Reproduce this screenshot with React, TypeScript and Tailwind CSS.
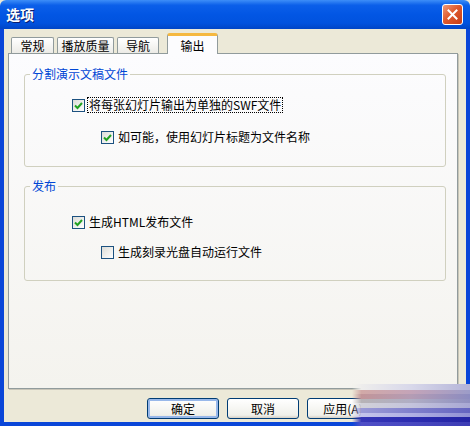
import React from "react";

const CheckBox = ({ checked }: { checked: boolean }) => (
  <span className="w-[13px] h-[13px] shrink-0 border border-[#1c5180] bg-[linear-gradient(135deg,#dcdcd7,#ffffff)] flex items-center justify-center">
    {checked && (
      <svg width="11" height="11" viewBox="0 0 11 11">
        <polyline points="2,5.5 4.5,8 9,3" fill="none" stroke="#21a121" strokeWidth="2" />
      </svg>
    )}
  </span>
);

const Option = ({
  checked,
  label,
  indent,
  focus,
}: {
  checked: boolean;
  label: string;
  indent: string;
  focus?: boolean;
}) => (
  <div className={`flex items-center h-[16px] gap-[3px] ${indent}`}>
    <CheckBox checked={checked} />
    <span className={`leading-[14px] px-[1px] ${focus ? "outline outline-1 outline-dotted outline-black" : ""}`}>
      {label}
    </span>
  </div>
);

const Tab = ({ label, w, active }: { label: string; w: string; active?: boolean }) =>
  active ? (
    <div
      className={`${w} h-[21px] -mb-[1px] relative z-10 bg-[#fcfcfe] border-x border-[#919b9c] border-t-[3px] border-t-[#f5b840] rounded-t-[3px] flex justify-center pt-[1px]`}
    >
      {label}
    </div>
  ) : (
    <div
      className={`${w} h-[16px] bg-[linear-gradient(to_bottom,#ffffff,#ecebe6)] border-x border-t border-[#919b9c] rounded-t-[2px] flex justify-center items-center`}
    >
      {label}
    </div>
  );

const Button = ({ label, primary }: { label: string; primary?: boolean }) => (
  <button
    className={`w-[72px] h-[21px] rounded-[3px] border border-[#003c74] bg-[linear-gradient(to_bottom,#ffffff,#f0f0ea_85%,#d6d0c5)] flex items-center justify-center text-[12px] leading-none ${
      primary ? "shadow-[inset_0_0_0_2px_#98b8ea]" : ""
    }`}
  >
    {label}
  </button>
);

export default function App() {
  return (
    <div className="w-[470px] h-[426px] relative overflow-hidden bg-[#ece9d8] font-['Noto_Sans_CJK_SC','Liberation_Sans',sans-serif] text-[12px] text-black">
      {/* title bar */}
      <div className="h-[29px] bg-[linear-gradient(to_bottom,#3d8ef8_0%,#0b5fe9_18%,#0256e4_50%,#0152de_80%,#0045c6_100%)] rounded-t-[6px] flex items-center justify-between pl-[6px] pr-[7px]">
        <span className="text-white font-bold text-[14px] [text-shadow:1px_1px_0_#0a1e6e]">选项</span>
        <div className="w-[21px] h-[21px] rounded-[3px] border border-white bg-[linear-gradient(135deg,#f09a78,#df5a2e_45%,#c43c18)] flex items-center justify-center">
          <svg width="11" height="11" viewBox="0 0 11 11">
            <path d="M1.5 1.5 L9.5 9.5 M9.5 1.5 L1.5 9.5" stroke="#fff" strokeWidth="2" strokeLinecap="square" />
          </svg>
        </div>
      </div>

      {/* body */}
      <div className="h-[397px] border-x-4 border-b-4 border-[#0a46d8] flex flex-col pl-[4px] pr-[8px] pt-[4px]">
        {/* tabs */}
        <div className="flex items-end h-[20px] pl-[3px] gap-[3px]">
          <Tab label="常规" w="w-[43px]" />
          <Tab label="播放质量" w="w-[57px]" />
          <Tab label="导航" w="w-[42px]" />
          <div className="w-[2px]" />
          <Tab label="输出" w="w-[51px]" active />
        </div>

        {/* panel */}
        <div className="h-[336px] border border-[#919b9c] shadow-[1px_1px_0_#c8c5b8] bg-[linear-gradient(to_bottom,#fcfcfe,#f4f3ee)] pl-[15px] pt-[12px]">
          <fieldset className="w-[422px] h-[101px] border border-[#d0d0bf] rounded-[3px]">
            <legend className="ml-[5px] px-[2px] text-[#0046d5] leading-[16px]">分割演示文稿文件</legend>
            <Option checked label="将每张幻灯片输出为单独的SWF文件" indent="ml-[47px] mt-[15px]" focus />
            <Option checked label="如可能，使用幻灯片标题为文件名称" indent="ml-[76px] mt-[16px]" />
          </fieldset>

          <fieldset className="w-[422px] h-[103px] mt-[11px] border border-[#d0d0bf] rounded-[3px]">
            <legend className="ml-[5px] px-[2px] text-[#0046d5] leading-[16px]">发布</legend>
            <Option checked label="生成HTML发布文件" indent="ml-[47px] mt-[20px]" />
            <Option checked={false} label="生成刻录光盘自动运行文件" indent="ml-[76px] mt-[14px]" />
          </fieldset>
        </div>

        {/* buttons */}
        <div className="flex gap-[8px] pl-[139px] mt-[9px]">
          <Button label="确定" primary />
          <Button label="取消" />
          <Button label="应用(A)" />
        </div>
      </div>

      {/* blurred watermark streaks at the lower right */}
      <div className="absolute right-0 bottom-0 w-[118px] h-[42px] flex flex-col [mask-image:linear-gradient(to_right,transparent,black_8%)]">
        <div className="h-[6px] bg-[linear-gradient(to_right,#f2f1ec,#d8d8ea_50%,#b4b4d8)]" />
        <div className="h-[4px] bg-[linear-gradient(to_right,#d4aaa4,#c4a4b8_50%,#9c9cc8)]" />
        <div className="h-[5px] bg-[linear-gradient(to_right,#c49494,#b49cb4_50%,#8c8cc0)]" />
        <div className="h-[4px] bg-[linear-gradient(to_right,#b8b4b4,#b0aec4_50%,#9090c0)]" />
        <div className="h-[5px] bg-[linear-gradient(to_right,#d4d4d8,#c4c4dc_50%,#a8a8d4)]" />
        <div className="h-[5px] bg-[linear-gradient(to_right,#a0a0d8,#8080cc_50%,#6464c0)]" />
        <div className="h-[4px] bg-[linear-gradient(to_right,#c8c8ec,#b0b0e4_50%,#9090d4)]" />
        <div className="h-[5px] bg-[linear-gradient(to_right,#3838b8,#2c2cb0_50%,#2424a4)]" />
        <div className="h-[4px] bg-[linear-gradient(to_right,#5050c8,#4848c0_50%,#3c3cb4)]" />
      </div>
    </div>
  );
}
